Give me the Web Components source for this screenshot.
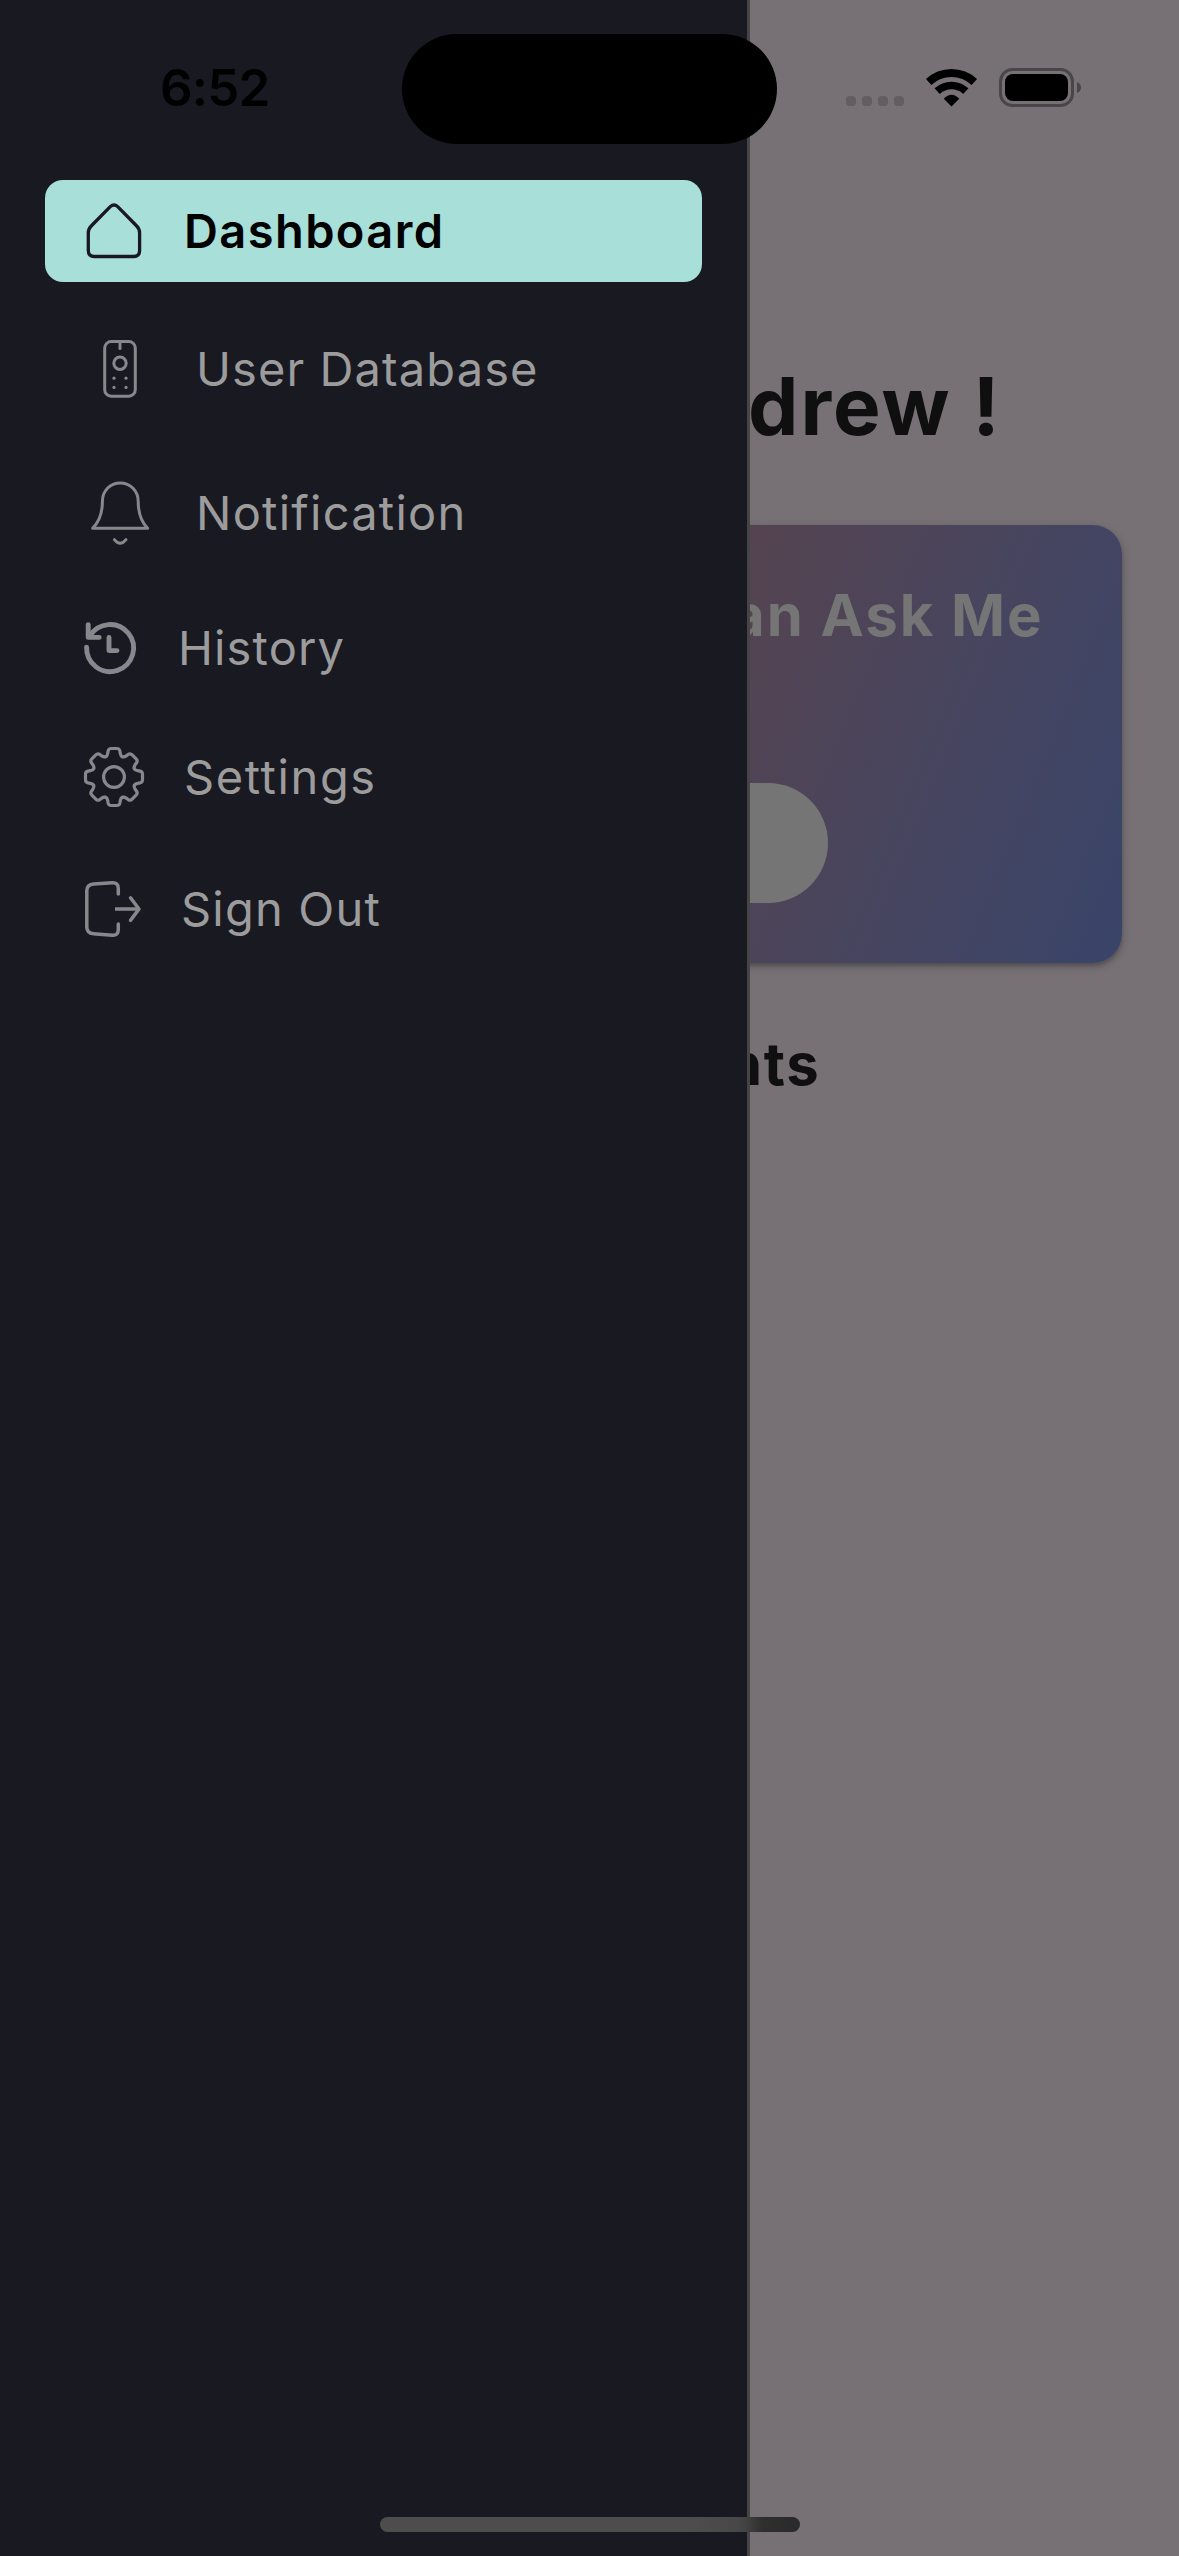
<!DOCTYPE html>
<html lang="en">
<head>
<meta charset="utf-8">
<title>Dashboard</title>
<style>
html,body{margin:0;padding:0}
body{width:1179px;height:2556px;overflow:hidden;font-family:Inter,"Liberation Sans",sans-serif}
</style>
</head>
<body>
<app-screen>
  <home-view></home-view>
  <side-drawer slot="drawer">
    <drawer-item icon="home" active style="--h:102px;--x:100px;--ls:1.4px">Dashboard</drawer-item>
    <drawer-item icon="remote" style="--h:174px;--x:112px;--ls:1.1px">User Database</drawer-item>
    <drawer-item icon="bell" style="--h:114px;--x:112px;--ls:1.25px">Notification</drawer-item>
    <drawer-item icon="history" style="--h:156px;--x:94px;--ls:1.15px">History</drawer-item>
    <drawer-item icon="gear" style="--h:102px;--x:100px;--ls:1.6px">Settings</drawer-item>
    <drawer-item icon="exit" style="--h:162px;--x:97px;--ls:1.2px">Sign Out</drawer-item>
  </side-drawer>
  <status-bar slot="status"></status-bar>
  <home-indicator slot="indicator"></home-indicator>
</app-screen>
<script>
const define = (name, html, setup) => customElements.define(name, class extends HTMLElement {
  constructor() {
    super();
    this.attachShadow({ mode: 'open' }).innerHTML = html;
  }
  connectedCallback() { if (setup) setup(this); }
});

const tooth = 'M-8.4-20.3C-7.1-20.8-6.6-21.8-6.3-23.6L-5.9-26Q-5.4-28.5-2.8-28.5H2.8Q5.4-28.5 5.9-26L6.3-23.6C6.6-21.8 7.1-20.8 8.4-20.3';
const gear = [0, 45, 90, 135, 180, 225, 270, 315].map(a => `<path d="${tooth}" transform="rotate(${a})"/>`).join('');
const icons = {
  home: '<path stroke-width="3.3" d="M4.3 35Q4.3 30.8 7.2 28L26.3 8.6Q30 5.2 33.7 8.6L52.7 28Q55.6 30.8 55.6 35V52.5Q55.6 58.5 49.6 58.5H10.3Q4.3 58.5 4.3 52.5Z"/>',
  remote: '<g stroke-width="3"><rect x="20.7" y="5.6" width="30.6" height="54.6" rx="6.5"/><path d="M36 6v6.5"/><circle cx="36" cy="27.2" r="6.2"/></g><g fill="currentColor" stroke="none"><circle cx="30" cy="42.2" r="1.6"/><circle cx="42" cy="42.2" r="1.6"/><circle cx="30" cy="51.4" r="1.6"/><circle cx="42" cy="51.4" r="1.6"/></g>',
  bell: '<g stroke-width="3"><path d="M18.4 21.5C18.4 11 26 3 36.2 3S54.2 11 54.2 21.5C54.2 33.5 57 41.5 63.6 48.3H8.6C15.4 41.5 18.4 33.5 18.4 21.5Z"/><path d="M30.4 59.6Q36.2 67 42 59.6"/></g>',
  history: '<g stroke-width="4.9"><path d="M2.6 32.2A23.5 23.5 0 1 0 5.9 21"/><path d="M4.2 9.6V22.4H15.2"/><path d="M25 22.4V35.6H33"/></g>',
  gear: `<g stroke-width="3.2" transform="translate(30 33)">${gear}<circle r="10.4"/></g>`,
  exit: '<g stroke-width="3.5"><path d="M34.3 18V12.5Q34.3 6.4 28.3 6.7L9.5 8Q2.8 8.6 2.8 14.8V51Q2.8 57.2 9.5 57.8L28.3 59.2Q34.3 59.6 34.3 53.5V48"/><path stroke-linecap="butt" d="M31 33H54"/><path d="M46.5 21.8L55 33L46.5 44.4"/></g>'
};

define('app-screen', `
<style>
:host{display:block;position:relative;width:1179px;height:2556px;overflow:hidden;background:#777175}
.layer{position:absolute}
.drawer{inset:0 auto 0 0}
.status{inset:0 0 auto 0}
.indicator{left:0;right:0;bottom:24px}
</style>
<slot></slot>
<div class="layer drawer"><slot name="drawer"></slot></div>
<div class="layer status"><slot name="status"></slot></div>
<div class="layer indicator"><slot name="indicator"></slot></div>`);

define('status-bar', `
<style>
:host{display:flex;height:178px;box-sizing:border-box;padding-top:33px;color:#000}
.time{width:402px;height:111px;box-sizing:border-box;padding-left:160px;font-size:51px;font-weight:600;line-height:110px;letter-spacing:-.8px}
.island{width:375px;height:110px;margin-top:1px;border-radius:55px;background:#000}
.right{display:flex;margin-left:69px;height:111px}
.dots{display:flex;gap:6px;margin-top:63px}
.dots i{width:10px;height:10px;border-radius:4px;background:#625d60}
.wifi{margin:36px 0 0 22px}
.battery{margin:35px 0 0 21px}
svg{display:block}
</style>
<div class="time">6:52</div>
<div class="island"></div>
<div class="right">
  <div class="dots"><i></i><i></i><i></i><i></i></div>
  <svg class="wifi" width="52" height="38" viewBox="0 0 52 38" fill="none" stroke="#000">
    <path stroke-width="8" d="M2.7 13A33.5 33.5 0 0 1 48.3 13"/>
    <path stroke-width="7.7" d="M11.2 22.1A21 21 0 0 1 39.8 22.1"/>
    <path fill="#000" stroke="none" d="M25.5 37.5L17.8 29.7Q25.5 21.8 33.2 29.7Z"/>
  </svg>
  <svg class="battery" width="83" height="39" viewBox="0 0 83 39">
    <rect x="1.5" y="1.5" width="72" height="36" rx="12" fill="none" stroke="#49464a" stroke-width="3"/>
    <rect x="6" y="6" width="63" height="27" rx="8"/>
    <path fill="#49464a" d="M78 14Q82 15.500 82 19.500T78 25Z"/>
  </svg>
</div>`);

define('side-drawer', `
<style>
:host{display:flex;flex-direction:column;width:750px;height:2556px;box-sizing:border-box;padding:180px 45px 0;background:#191922;border-right:3px solid #454545}
</style>
<slot></slot>`);

define('drawer-item', `
<style>
:host{display:flex;align-items:center;height:var(--h);flex:none;width:657px;box-sizing:border-box;padding-left:39px;border-radius:18px;color:#88888c}
:host([active]){background:#a9dfd9;color:#191822}
.icon{width:0;flex:none}
svg{display:block;overflow:visible}
.label{padding-left:var(--x);font-size:47px;line-height:60px;letter-spacing:var(--ls);color:#9c9c9c;white-space:nowrap}
:host([active]) .label{color:#000;font-weight:600}
</style>
<div class="icon"><svg width="72" height="66" viewBox="0 0 72 66" fill="none" stroke="currentColor" stroke-linecap="round" stroke-linejoin="round"></svg></div>
<div class="label"><slot></slot></div>`,
  el => { el.shadowRoot.querySelector('svg').innerHTML = icons[el.getAttribute('icon')]; });

define('home-view', `
<style>
:host{display:flex;flex-direction:column;height:2556px;box-sizing:border-box;padding:356px 57px 0;white-space:nowrap}
h1,h2,p{margin:0}
h1{height:169px;padding-left:691px;font-size:80px;line-height:100px;font-weight:700;letter-spacing:2px;color:#0f0f0f}
.card{display:flex;flex-direction:column;height:438px;border-radius:29px;box-sizing:border-box;padding-top:50px;background:linear-gradient(112.4deg,#584450 45%,#554450 56%,#464560 80%,#394469 100%);box-shadow:0 3px 9px rgba(0,0,0,.25),0 3px 3px rgba(0,0,0,.12)}
p{height:208px;padding-left:674px;font-size:58px;line-height:80px;font-weight:700;letter-spacing:2px;color:#757575}
.pill{width:300px;height:120px;margin-left:471px;border-radius:60px;background:#757575}
h2{margin-top:61px;padding-left:669px;font-size:58px;line-height:80px;font-weight:700;letter-spacing:1.7px;color:#0f0f0f}
</style>
<h1>drew !</h1>
<div class="card"><p>an Ask Me</p><div class="pill"></div></div>
<h2>nts</h2>`);

define('home-indicator', `
<style>
:host{display:flex;justify-content:center;box-sizing:border-box;padding-left:1px}
div{width:420px;height:15px;border-radius:8px;background:linear-gradient(90deg,#4d4d4d 74%,#484848 85%,#434343 87%,#2f2f2f 91%,#2a2a2a 100%)}
</style>
<div></div>`);
</script>
</body>
</html>
